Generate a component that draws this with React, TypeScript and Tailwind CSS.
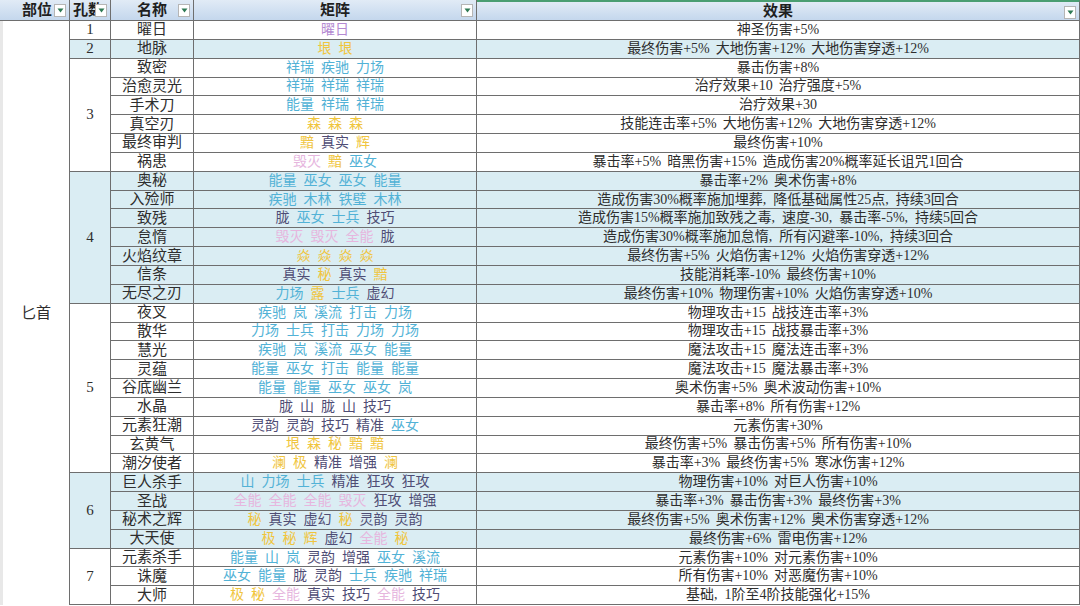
import React from 'react'

type Tok = [string, string]

const tone: Record<string, string> = {
  b: 'text-[#52b2d6]',
  p: 'text-[#4f4d75]',
  k: 'text-[#e6b6de]',
  y: 'text-[#f0c53e]',
  m: 'text-[#b48ad2]',
}

const spanCls: Record<number, string> = {
  1: 'row-span-1',
  3: 'row-span-3',
  4: 'row-span-4',
  6: 'row-span-6',
  7: 'row-span-7',
  9: 'row-span-9',
}

const t = (s: string): Tok[] =>
  s.split(' ').map((w) => [w[0], w.slice(1)] as Tok)

const groups: { no: number; blue: boolean; rows: [string, Tok[], string][] }[] = [
  { no: 1, blue: false, rows: [['曜日', t('m曜日'), '神圣伤害+5%']] },
  { no: 2, blue: true, rows: [['地脉', t('y垠 y垠'), '最终伤害+5% 大地伤害+12% 大地伤害穿透+12%']] },
  {
    no: 3,
    blue: false,
    rows: [
      ['致密', t('b祥瑞 b疾驰 b力场'), '暴击伤害+8%'],
      ['治愈灵光', t('b祥瑞 b祥瑞 b祥瑞'), '治疗效果+10 治疗强度+5%'],
      ['手术刀', t('b能量 b祥瑞 b祥瑞'), '治疗效果+30'],
      ['真空刃', t('y森 y森 y森'), '技能连击率+5% 大地伤害+12% 大地伤害穿透+12%'],
      ['最终审判', t('y黯 p真实 y辉'), '最终伤害+10%'],
      ['祸患', t('k毁灭 y黯 b巫女'), '暴击率+5% 暗黑伤害+15% 造成伤害20%概率延长诅咒1回合'],
    ],
  },
  {
    no: 4,
    blue: true,
    rows: [
      ['奥秘', t('b能量 b巫女 b巫女 b能量'), '暴击率+2% 奥术伤害+8%'],
      ['入殓师', t('b疾驰 b木林 b铁壁 b木林'), '造成伤害30%概率施加埋葬,降低基础属性25点,持续3回合'],
      ['致残', t('p胧 b巫女 b士兵 p技巧'), '造成伤害15%概率施加致残之毒,速度-30,暴击率-5%,持续5回合'],
      ['怠惰', t('k毁灭 k毁灭 k全能 p胧'), '造成伤害30%概率施加怠惰,所有闪避率-10%,持续3回合'],
      ['火焰纹章', t('y焱 y焱 y焱 y焱'), '最终伤害+5% 火焰伤害+12% 火焰伤害穿透+12%'],
      ['信条', t('p真实 y秘 p真实 y黯'), '技能消耗率-10% 最终伤害+10%'],
      ['无尽之刃', t('b力场 y露 b士兵 p虚幻'), '最终伤害+10% 物理伤害+10% 火焰伤害穿透+10%'],
    ],
  },
  {
    no: 5,
    blue: false,
    rows: [
      ['夜叉', t('b疾驰 b岚 b溪流 b打击 b力场'), '物理攻击+15 战技连击率+3%'],
      ['散华', t('b力场 b士兵 b打击 b力场 b力场'), '物理攻击+15 战技暴击率+3%'],
      ['慧光', t('b疾驰 b岚 b溪流 b巫女 b能量'), '魔法攻击+15 魔法连击率+3%'],
      ['灵蕴', t('b能量 b巫女 b打击 b能量 b能量'), '魔法攻击+15 魔法暴击率+3%'],
      ['谷底幽兰', t('b能量 b能量 b巫女 b巫女 b岚'), '奥术伤害+5% 奥术波动伤害+10%'],
      ['水晶', t('p胧 p山 p胧 p山 p技巧'), '暴击率+8% 所有伤害+12%'],
      ['元素狂潮', t('p灵韵 p灵韵 p技巧 p精准 b巫女'), '元素伤害+30%'],
      ['玄黄气', t('y垠 y森 y秘 y黯 y黯'), '最终伤害+5% 暴击伤害+5% 所有伤害+10%'],
      ['潮汐使者', t('y澜 y极 p精准 p增强 y澜'), '暴击率+3% 最终伤害+5% 寒冰伤害+12%'],
    ],
  },
  {
    no: 6,
    blue: true,
    rows: [
      ['巨人杀手', t('b山 b力场 b士兵 p精准 p狂攻 p狂攻'), '物理伤害+10% 对巨人伤害+10%'],
      ['圣战', t('k全能 k全能 k全能 k毁灭 p狂攻 p增强'), '暴击率+3% 暴击伤害+3% 最终伤害+3%'],
      ['秘术之辉', t('y秘 p真实 p虚幻 y秘 p灵韵 p灵韵'), '最终伤害+5% 奥术伤害+12% 奥术伤害穿透+12%'],
      ['大天使', t('y极 y秘 y辉 p虚幻 k全能 y秘'), '最终伤害+6% 雷电伤害+12%'],
    ],
  },
  {
    no: 7,
    blue: false,
    rows: [
      ['元素杀手', t('b能量 b山 b岚 p灵韵 p增强 b巫女 b溪流'), '元素伤害+10% 对元素伤害+10%'],
      ['诛魔', t('b巫女 b能量 p胧 p灵韵 b士兵 b疾驰 b祥瑞'), '所有伤害+10% 对恶魔伤害+10%'],
      ['大师', t('y极 y秘 k全能 p真实 p技巧 k全能 p技巧'), '基础,1阶至4阶技能强化+15%'],
    ],
  },
]

function FilterButton() {
  return (
    <span className="absolute right-[3px] top-[4px] flex h-[13px] w-[12px] items-center justify-center border border-[#b5b5b5] bg-white">
      <svg width="7" height="5" viewBox="0 0 7 5">
        <path d="M0.5 0.5 L6.5 0.5 L3.5 4.5 Z" fill="#2f7a55" />
      </svg>
    </span>
  )
}

const line = 'border-[#6e6e6e]'
const cell = `flex items-center justify-center border-r border-b ${line} whitespace-pre overflow-hidden`

export default function App() {
  return (
    <div
      className="h-[606px] w-[1080px] overflow-hidden bg-white text-[14px] leading-none text-[#2e2e2e]"
      style={{ fontFamily: '"Liberation Serif", "Noto Sans CJK SC", serif' }}
    >
      <div className="grid grid-cols-[70px_41px_83px_283px_1fr] grid-rows-[21px_repeat(31,18.85px)]">
        {/* 表头 */}
        {['部位', '孔数', '名称', '矩阵', '效果'].map((h, i) => (
          <div
            key={h}
            className={`relative flex items-center border-r border-b ${line} bg-gradient-to-b from-[#e1ebf6] to-[#c4d7ed] text-[15px] font-bold text-[#1f1f1f] ${
              i === 0 ? 'pl-[22px]' : i === 1 ? 'pl-[3px] overflow-hidden' : 'justify-center'
            } ${i === 4 ? 'border-t-2 border-t-[#4a9e72]' : ''}`}
          >
            <span>{h}</span>
            <FilterButton />
          </div>
        ))}

        {/* 部位 */}
        <div className={`col-start-1 row-span-31 row-start-2 flex items-center justify-center border-l-[3px] border-l-[#e8e8e8] border-r ${line} text-[15px]`}>
          匕首
        </div>

        {groups.map((g) =>
          g.rows.map((r, ri) => {
            const bg = g.blue ? 'bg-[#daedf3]' : 'bg-white'
            return (
              <React.Fragment key={r[0]}>
                {ri === 0 && (
                  <div className={`col-start-2 ${spanCls[g.rows.length]} ${cell} ${bg} text-[15px]`}>{g.no}</div>
                )}
                <div className={`col-start-3 ${cell} ${bg} text-[15px]`}>{r[0]}</div>
                <div className={`col-start-4 ${cell} ${bg} gap-[7px]`}>
                  {r[1].map(([c, w], k) => (
                    <span key={k} className={tone[c]}>
                      {w}
                    </span>
                  ))}
                </div>
                <div className={`col-start-5 ${cell} ${bg} gap-[6px]`}>
                  {r[2].split(' ').map((s, k) => (
                    <span key={k}>{s.replace(/,/g, ',  ')}</span>
                  ))}
                </div>
              </React.Fragment>
            )
          })
        )}
      </div>
    </div>
  )
}
